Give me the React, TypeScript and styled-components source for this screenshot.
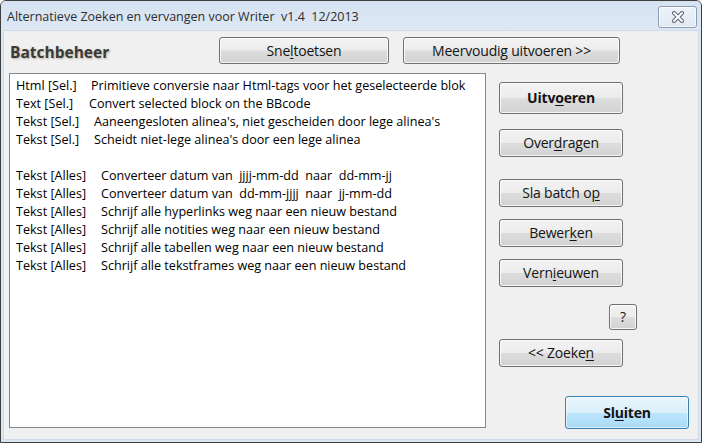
import React from "react";
import styled, { createGlobalStyle } from "styled-components";

const Global = createGlobalStyle`
  html, body { margin: 0; padding: 0; background: #ffffff; }
  body { font-family: "Open Sans", "Noto Sans", sans-serif; }
  #root { width: 702px; height: 443px; }
`;

const Window = styled.div`
  box-sizing: border-box;
  width: 702px;
  height: 443px;
  border: 1px solid #3e3e3e;
  border-radius: 6px 6px 0 0;
  background: #dbe6f3;
  display: flex;
  flex-direction: column;
  overflow: hidden;
`;

const TitleBar = styled.div`
  height: 29px;
  flex: none;
  display: flex;
  align-items: center;
  justify-content: space-between;
  padding: 0 4px 0 6px;
  background: linear-gradient(#d6e2f0, #dde8f4);
`;

const TitleText = styled.div`
  font-family: "Open Sans", sans-serif;
  font-size: 12.5px;
  color: #2e2e2e;
  white-space: pre;
  padding-top: 1px;
`;

const CloseButton = styled.div`
  box-sizing: border-box;
  width: 39px;
  height: 22px;
  margin-top: 2px;
  border: 1px solid #8d9cb1;
  border-radius: 3px;
  background: linear-gradient(#eef3f9, #dfe8f2);
  box-shadow: inset 0 0 0 1px rgba(255, 255, 255, 0.7);
  display: flex;
  align-items: center;
  justify-content: center;
`;

const Body = styled.div`
  flex: 1;
  margin: 0 2px 2px 2px;
  border: 1px solid #cfdbe9;
  background: #f0f0f0;
  display: flex;
  flex-direction: column;
  padding: 6px 0 0 5px;
`;

const HeaderRow = styled.div`
  display: flex;
  align-items: center;
  height: 26px;
  margin-bottom: 10px;
`;

const SectionTitle = styled.div`
  width: 210px;
  font-family: "Open Sans", sans-serif;
  font-weight: 700;
  font-size: 15.5px;
  color: #3a3a3a;
  text-shadow: 1px 1px 2px rgba(90, 60, 30, 0.35);
  padding: 4px 0 0 1px;
  box-sizing: border-box;
`;

const Button = styled.button<{ $w: number; $h: number; $top?: number; $left?: number; $primary?: boolean; $bold?: boolean; $end?: boolean }>`
  box-sizing: border-box;
  width: ${(p) => p.$w}px;
  height: ${(p) => p.$h}px;
  margin: ${(p) => p.$top ?? 0}px 0 0 ${(p) => p.$left ?? 0}px;
  align-self: ${(p) => (p.$end ? "flex-end" : "flex-start")};
  flex: none;
  padding: 0;
  border: 1px solid ${(p) => (p.$primary ? "#3c7fb1" : "#707070")};
  border-radius: 3px;
  background: ${(p) =>
    p.$primary
      ? "linear-gradient(#e9f6fd 0%, #d9f0fc 50%, #bee6fd 51%, #a9daf6 100%)"
      : "linear-gradient(#f3f3f3 0%, #ececec 48%, #dddddd 52%, #d2d2d2 100%)"};
  box-shadow: inset 0 0 0 1px ${(p) => (p.$primary ? "rgba(255,255,255,0.55)" : "rgba(255,255,255,0.8)")};
  font-family: "Open Sans", sans-serif;
  font-size: 14px;
  font-weight: ${(p) => (p.$bold ? 700 : 400)};
  color: #141414;
  white-space: pre;
  letter-spacing: -0.2px;
  line-height: 1;
  display: flex;
  align-items: center;
  justify-content: center;
  cursor: default;
`;

const Key = styled.span`
  text-decoration: underline;
  text-underline-offset: 2px;
`;

const MainRow = styled.div`
  display: flex;
  align-items: flex-start;
`;

const ListBox = styled.div`
  box-sizing: border-box;
  width: 477px;
  height: 355px;
  border: 1px solid #828790;
  background: #ffffff;
  padding: 2px 6px;
  flex: none;
`;

const Row = styled.div`
  display: flex;
  height: 18px;
  align-items: center;
  font-family: "Open Sans", sans-serif;
  font-size: 12.6px;
  color: #000000;
  white-space: pre;
`;

const Label = styled.span<{ $w: number }>`
  width: ${(p) => p.$w}px;
  flex: none;
`;

const SideColumn = styled.div`
  display: flex;
  flex-direction: column;
  margin-left: 13px;
  width: 190px;
`;

type Item = { label: string; w: number; desc: string } | null;

const items: Item[] = [
  { label: "Html [Sel.]", w: 75, desc: "Primitieve conversie naar Html-tags voor het geselecteerde blok" },
  { label: "Text [Sel.]", w: 73, desc: "Convert selected block on the BBcode" },
  { label: "Tekst [Sel.]", w: 78, desc: "Aaneengesloten alinea's, niet gescheiden door lege alinea's" },
  { label: "Tekst [Sel.]", w: 78, desc: "Scheidt niet-lege alinea's door een lege alinea" },
  null,
  { label: "Tekst [Alles]", w: 85, desc: "Converteer datum van  jjjj-mm-dd  naar  dd-mm-jj" },
  { label: "Tekst [Alles]", w: 85, desc: "Converteer datum van  dd-mm-jjjj  naar  jj-mm-dd" },
  { label: "Tekst [Alles]", w: 85, desc: "Schrijf alle hyperlinks weg naar een nieuw bestand" },
  { label: "Tekst [Alles]", w: 85, desc: "Schrijf alle notities weg naar een nieuw bestand" },
  { label: "Tekst [Alles]", w: 85, desc: "Schrijf alle tabellen weg naar een nieuw bestand" },
  { label: "Tekst [Alles]", w: 85, desc: "Schrijf alle tekstframes weg naar een nieuw bestand" },
];

const CloseIcon = () => (
  <svg width="14" height="12" viewBox="0 0 14 12">
    <path d="M3 2 L11 10 M11 2 L3 10" stroke="#5d6674" strokeWidth="4" strokeLinecap="round" />
    <path d="M3 2 L11 10 M11 2 L3 10" stroke="#ffffff" strokeWidth="2" strokeLinecap="round" />
  </svg>
);

export default function App() {
  return (
    <>
      <Global />
      <Window>
        <TitleBar>
          <TitleText>{"Alternatieve Zoeken en vervangen voor Writer  v1.4  12/2013"}</TitleText>
          <CloseButton>
            <CloseIcon />
          </CloseButton>
        </TitleBar>
        <Body>
          <HeaderRow>
            <SectionTitle>Batchbeheer</SectionTitle>
            <Button $w={170} $h={27}>
              Sne<Key>l</Key>toetsen
            </Button>
            <Button $w={217} $h={27} $left={14}>
              {"Meervoudig uitvoeren >>"}
            </Button>
          </HeaderRow>
          <MainRow>
            <ListBox>
              {items.map((it, i) =>
                it ? (
                  <Row key={i}>
                    <Label $w={it.w}>{it.label}</Label>
                    <span>{it.desc}</span>
                  </Row>
                ) : (
                  <Row key={i} />
                )
              )}
            </ListBox>
            <SideColumn>
              <Button $w={124} $h={32} $top={9} $bold>
                Uitv<Key>o</Key>eren
              </Button>
              <Button $w={124} $h={28} $top={15}>
                Over<Key>d</Key>ragen
              </Button>
              <Button $w={124} $h={28} $top={22}>
                Sla batch o<Key>p</Key>
              </Button>
              <Button $w={124} $h={28} $top={12}>
                Bewer<Key>k</Key>en
              </Button>
              <Button $w={124} $h={28} $top={12}>
                Vern<Key>i</Key>euwen
              </Button>
              <Button $w={28} $h={26} $top={17} $left={110}>
                ?
              </Button>
              <Button $w={124} $h={28} $top={9}>
                {"<< Zoeke"}
                <Key>n</Key>
              </Button>
              <Button $w={124} $h={33} $top={29} $primary $bold $end>
                Sl<Key>u</Key>iten
              </Button>
            </SideColumn>
          </MainRow>
        </Body>
      </Window>
    </>
  );
}
